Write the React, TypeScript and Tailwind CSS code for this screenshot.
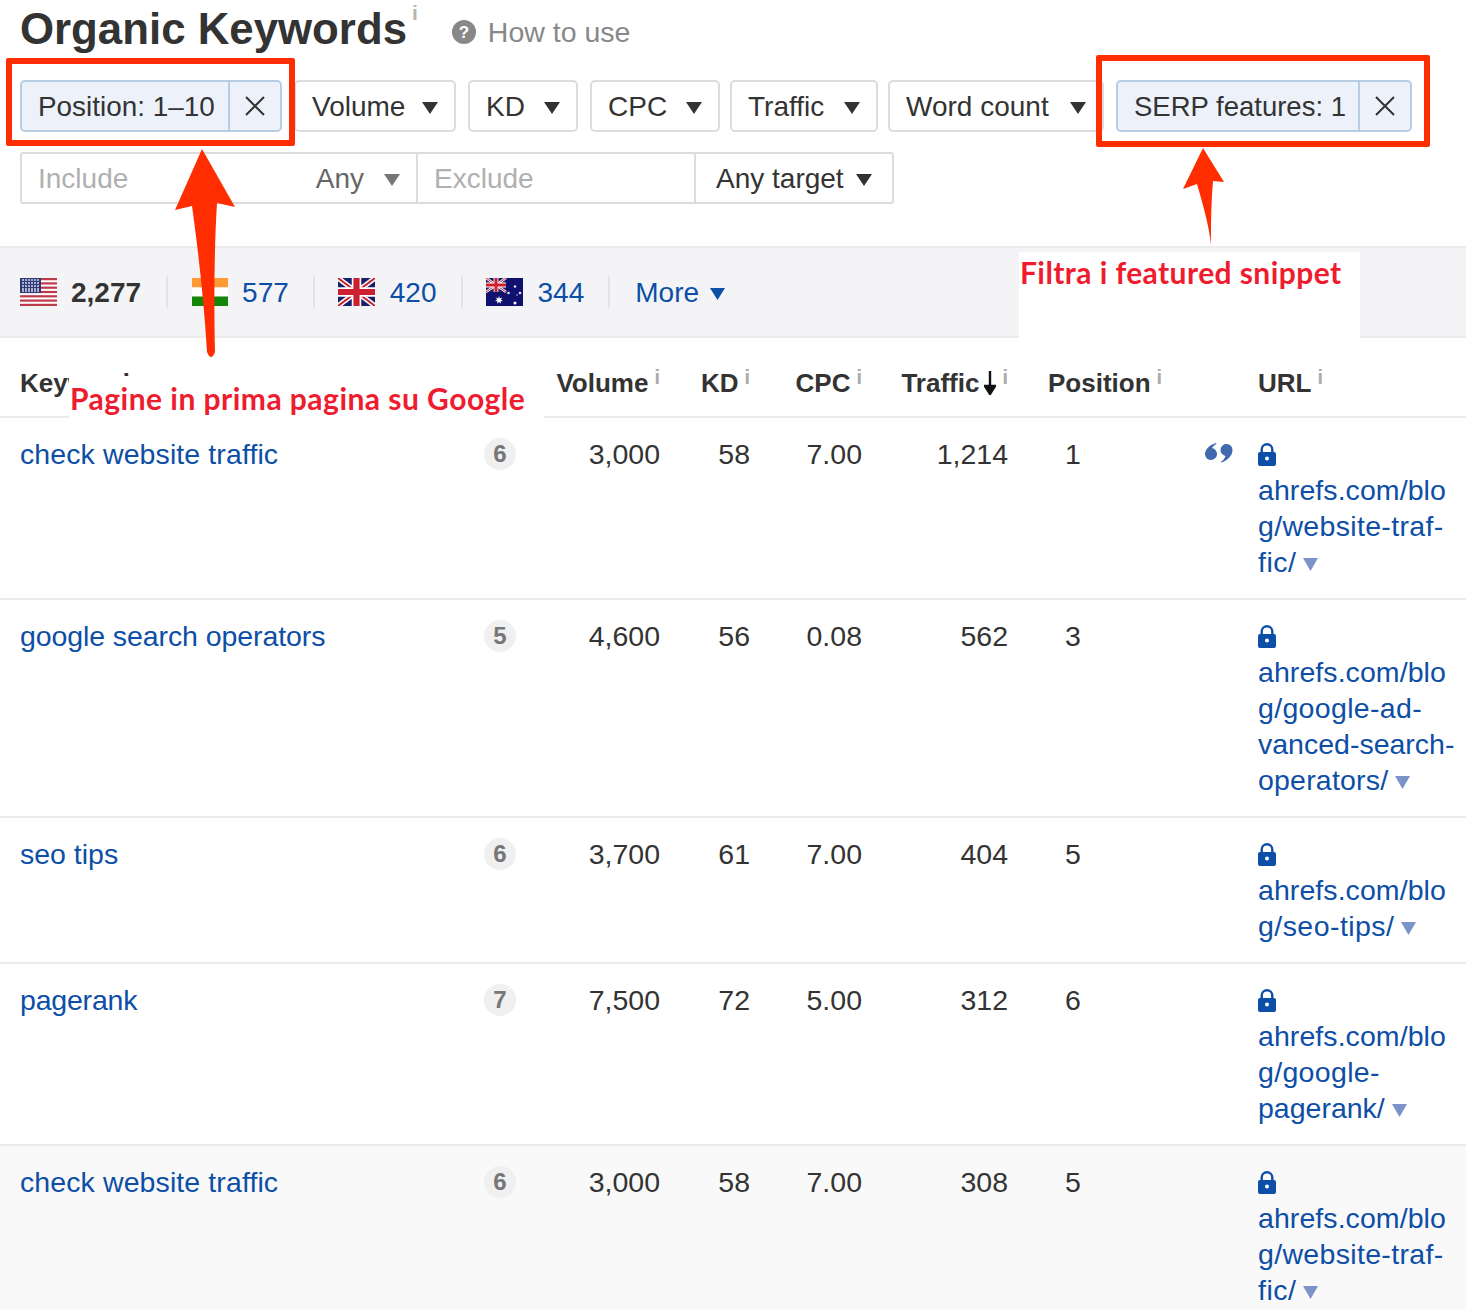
import React from "react";

const Tri = ({ c = "#333", w = 16, h = 12 }: { c?: string; w?: number; h?: number }) => (
  <svg width={w} height={h} viewBox={`0 0 ${w} ${h}`} className="shrink-0 mt-[3px]">
    <path d={`M0 0H${w}L${w / 2} ${h}Z`} fill={c} />
  </svg>
);

const Info = () => (
  <span className="ml-[6px] self-start mt-[2px] text-[20px] leading-[20px] font-bold text-[#acacac]">i</span>
);

const Chip = ({ label, w, sep, size }: { label: string; w: string; sep: string; size: string }) => (
  <div className={`${w} h-[52px] flex border-2 border-[#b6cde4] bg-[#edf2fa] rounded-[5px]`}>
    <div className={`${sep} ${size} flex items-center pl-[16px] pt-[2px] border-r-2 border-[#b6cde4] whitespace-nowrap`}>{label}</div>
    <div className="flex-1 flex items-center justify-center">
      <svg width="20" height="20" viewBox="0 0 20 20">
        <path d="M1 1L19 19M19 1L1 19" stroke="#333" strokeWidth="2" />
      </svg>
    </div>
  </div>
);

const Btn = ({ label, w, ml }: { label: string; w: string; ml: string }) => (
  <div className={`${w} ${ml} h-[52px] pl-[16px] pr-[16px] flex items-center justify-between border-2 border-[#dcdcdc] rounded-[5px] whitespace-nowrap text-[28px]`}>
    <span className="pt-[2px]">{label}</span>
    <Tri />
  </div>
);

const USFlag = () => (
  <svg width="37" height="28" viewBox="0 0 37 28" className="shrink-0">
    <rect width="37" height="28" fill="#fff" />
    {[0, 4.3, 8.6, 12.9, 17.2, 21.5, 25.8].map((y) => (
      <rect key={y} y={y} width="37" height="2.2" fill="#c0394b" />
    ))}
    <rect width="21" height="15" fill="#2d3a7a" />
    {[2, 5, 8, 11, 14, 17].map((x) =>
      [2, 5, 8, 11, 13].map((y) => <circle key={`${x}-${y}`} cx={x + 1} cy={y} r="0.9" fill="#e8e8f0" />)
    )}
  </svg>
);

const INFlag = () => (
  <svg width="36" height="28" viewBox="0 0 36 28" className="shrink-0">
    <rect width="36" height="9.500" fill="#ff9933" />
    <rect y="9.500" width="36" height="9" fill="#fff" />
    <rect y="18.500" width="36" height="9.500" fill="#138808" />
  </svg>
);

const UKFlagBody = ({ w, h }: { w: number; h: number }) => (
  <>
    <rect width={w} height={h} fill="#1a1f6c" />
    <path d={`M0 0L${w} ${h}M${w} 0L0 ${h}`} stroke="#fff" strokeWidth={h * 0.18} />
    <path d={`M0 0L${w} ${h}M${w} 0L0 ${h}`} stroke="#cc1f2f" strokeWidth={h * 0.07} />
    <path d={`M${w / 2} 0V${h}M0 ${h / 2}H${w}`} stroke="#fff" strokeWidth={h * 0.34} />
    <path d={`M${w / 2} 0V${h}M0 ${h / 2}H${w}`} stroke="#cc1f2f" strokeWidth={h * 0.22} />
  </>
);

const UKFlag = () => (
  <svg width="37" height="28" viewBox="0 0 37 28" className="shrink-0">
    <UKFlagBody w={37} h={28} />
  </svg>
);

const AUFlag = () => (
  <svg width="37" height="28" viewBox="0 0 37 28" className="shrink-0">
    <rect width="37" height="28" fill="#10106e" />
    <UKFlagBody w={20} h={14} />
    <path d="M13 18l.9 2.500 2.400-1-1.400 2.200 2.200 1.200-2.500.3.300 2.600-1.800-1.900-1.900 1.900.3-2.600-2.500-.3 2.200-1.200-1.400-2.200 2.400 1Z" fill="#fff" />
    <circle cx="29" cy="8.500" r="1.300" fill="#dfe0f0" />
    <circle cx="22.500" cy="15" r="1.300" fill="#dfe0f0" />
    <circle cx="34" cy="15" r="1.300" fill="#dfe0f0" />
    <circle cx="29" cy="25" r="1.500" fill="#fff" />
    <circle cx="31" cy="17" r="0.700" fill="#dfe0f0" />
  </svg>
);

const Lock = () => (
  <svg width="18" height="23" viewBox="0 0 18 23">
    <path
      d="M9 0a6.500 6.500 0 0 0-6.500 6.500V9H2a2 2 0 0 0-2 2v10a2 2 0 0 0 2 2h14a2 2 0 0 0 2-2V11a2 2 0 0 0-2-2h-.5V6.500A6.500 6.500 0 0 0 9 0Zm0 2.400a4.100 4.100 0 0 1 4.100 4.100V9H4.900V6.500A4.100 4.100 0 0 1 9 2.400Z"
      fill="#0d4ea6"
      fillRule="evenodd"
    />
    <circle cx="9" cy="15.500" r="2" fill="#fff" />
  </svg>
);

const Quote = () => (
  <svg width="28" height="20" viewBox="0 0 28 20" className="mt-[-2px]">
    <path d="M11 0C4 2 0 7 0 11a6 6 0 1 0 7-5.900C8 3.500 9.500 2 11.500 1Z" fill="#4169ad" />
    <path d="M27.500 7C27.500 12 23.500 17 16.500 19.500L16 18.500C18 17.500 19.500 15.500 20.500 12.900a6 6 0 1 1 7-5.900Z" fill="#4169ad" />
  </svg>
);

type Line = [string, string?];

type Row = {
  kw: string;
  kwc?: string;
  n: number;
  vol: string;
  kd: string;
  cpc: string;
  traffic: string;
  pos: string;
  quote?: boolean;
  url: Line[];
  bg?: string;
};

const rows: Row[] = [
  { kw: "check website traffic", kwc: "tracking-[0.1px]", n: 6, vol: "3,000", kd: "58", cpc: "7.00", traffic: "1,214", pos: "1", quote: true, url: [["ahrefs.com/blo", "tracking-[0.07px]"], ["g/website-traf-", "tracking-[0.33px]"], ["fic/", "tracking-[0.5px]"]] },
  { kw: "google search operators", kwc: "tracking-[-0.09px]", n: 5, vol: "4,600", kd: "56", cpc: "0.08", traffic: "562", pos: "3", url: [["ahrefs.com/blo", "tracking-[0.07px]"], ["g/google-ad-", "tracking-[0.33px]"], ["vanced-search-"], ["operators/", "tracking-[0.2px]"]] },
  { kw: "seo tips", n: 6, vol: "3,700", kd: "61", cpc: "7.00", traffic: "404", pos: "5", url: [["ahrefs.com/blo", "tracking-[0.07px]"], ["g/seo-tips/", "tracking-[0.45px]"]] },
  { kw: "pagerank", kwc: "tracking-[-0.2px]", n: 7, vol: "7,500", kd: "72", cpc: "5.00", traffic: "312", pos: "6", url: [["ahrefs.com/blo", "tracking-[0.07px]"], ["g/google-", "tracking-[0.33px]"], ["pagerank/"]] },
  { kw: "check website traffic", kwc: "tracking-[0.1px]", n: 6, vol: "3,000", kd: "58", cpc: "7.00", traffic: "308", pos: "5", url: [["ahrefs.com/blo", "tracking-[0.07px]"], ["g/website-traf-", "tracking-[0.33px]"], ["fic/", "tracking-[0.5px]"]], bg: "bg-[#f9f9f9]" },
];

const COLS = "grid grid-cols-[20px_464px_32px_144px_90px_112px_146px_197px_53px_208px]";

const Head = ({ label, cls }: { label: React.ReactNode; cls: string }) => (
  <div className={`${cls} flex items-center`}>
    {label}
    <Info />
  </div>
);

export default function App() {
  return (
    <div
      className="relative w-[1466px] h-[1310px] overflow-hidden bg-white text-[#333] text-[28.5px] leading-[36px]"
      style={{ fontFamily: '"Liberation Sans", Arial, sans-serif' }}
    >
      {/* Title */}
      <div className="h-[80px] pl-[20px] flex items-start">
        <h1 className="text-[43.8px] leading-[58px] font-bold">Organic Keywords</h1>
        <span className="ml-[5px] mt-[2px] text-[21px] leading-[21px] text-[#b5b5b5] font-bold">i</span>
        <div className="ml-[34px] mt-[14px] flex items-center text-[#888]">
          <svg width="24" height="24" viewBox="0 0 24 24">
            <circle cx="12" cy="12" r="12" fill="#888" />
            <text x="12" y="18" textAnchor="middle" fontSize="17" fontWeight="700" fill="#fff" fontFamily="Liberation Sans">?</text>
          </svg>
          <span className="ml-[12px]">How to use</span>
        </div>
      </div>

      {/* Filters */}
      <div className="flex pl-[20px]">
        <Chip label="Position: 1–10" size="text-[27.9px]" w="w-[262px]" sep="w-[208px]" />
        <Btn label="Volume" w="w-[162px]" ml="ml-[12px]" />
        <Btn label="KD" w="w-[110px]" ml="ml-[12px]" />
        <Btn label="CPC" w="w-[130px]" ml="ml-[12px]" />
        <Btn label="Traffic" w="w-[148px]" ml="ml-[10px]" />
        <Btn label="Word count" w="w-[216px]" ml="ml-[10px]" />
        <div className="ml-[12px]">
          <Chip label="SERP features: 1" size="text-[27.5px]" w="w-[296px]" sep="w-[242px]" />
        </div>
      </div>

      <div className="mt-[20px] ml-[20px] w-[874px] h-[52px] flex border-2 border-[#dcdcdc] rounded-[3px] text-[28px]">
        <div className="w-[396px] flex items-center justify-between pl-[16px] pr-[16px] border-r-2 border-[#dcdcdc]">
          <span className="text-[#b0b0b0] pt-[2px]">Include</span>
          <div className="flex items-center gap-[20px] text-[#666]">
            <span className="pt-[2px]">Any</span>
            <Tri c="#777" />
          </div>
        </div>
        <div className="w-[278px] flex items-center pl-[16px] pt-[2px] border-r-2 border-[#dcdcdc] text-[#b0b0b0]">Exclude</div>
        <div className="flex-1 flex items-center justify-between pl-[20px] pr-[20px]">
          <span className="pt-[2px]">Any target</span>
          <Tri />
        </div>
      </div>

      {/* Countries */}
      <div className="mt-[42px] h-[92px] flex items-center bg-[#f4f4f6] border-y-2 border-[#ebebeb] pl-[20px] text-[#0d4ea6] text-[28px]">
        <div className="flex items-center gap-[14px] pr-[25px] h-[32px] border-r-2 border-[#e4e4e6]">
          <USFlag />
          <span className="font-bold text-[#333] pt-[2px]">2,277</span>
        </div>
        <div className="flex items-center gap-[14px] pl-[24px] pr-[24px] h-[32px] border-r-2 border-[#e4e4e6]">
          <INFlag />
          <span className="pt-[2px]">577</span>
        </div>
        <div className="flex items-center gap-[15px] pl-[23px] pr-[24px] h-[32px] border-r-2 border-[#e4e4e6]">
          <UKFlag />
          <span className="pt-[2px]">420</span>
        </div>
        <div className="flex items-center gap-[15px] pl-[23px] pr-[24px] h-[32px] border-r-2 border-[#e4e4e6]">
          <AUFlag />
          <span className="pt-[2px]">344</span>
        </div>
        <div className="flex items-center gap-[11px] pl-[25px]">
          <span className="pt-[2px]">More</span>
          <Tri c="#0d4ea6" w={15} h={12} />
        </div>
      </div>

      {/* Table header */}
      <div className={`${COLS} h-[80px] border-b-2 border-[#ebebeb] text-[26px] font-bold items-center pt-[12px]`}>
        <div />
        <div>Keyword</div>
        <div />
        <Head label="Volume" cls="justify-end" />
        <Head label="KD" cls="justify-end" />
        <Head label="CPC" cls="justify-end" />
        <Head
          label={
            <span className="flex items-center">
              Traffic
              <svg width="12" height="24" viewBox="0 0 12 24" className="ml-[5px]">
                <path d="M6 0V20M1 15L6 23L11 15Z" stroke="#111" strokeWidth="2.400" fill="#111" />
              </svg>
            </span>
          }
          cls="justify-end"
        />
        <Head label="Position" cls="pl-[40px]" />
        <div />
        <Head label="URL" cls="" />
      </div>

      {/* Rows */}
      {rows.map((r, i) => (
        <div key={i} className={`${COLS} ${r.bg ?? ""} pt-[18px] pb-[18px] border-b-2 border-[#ebebeb] items-start`}>
          <div />
          <div className={`text-[#0d4ea6] ${r.kwc ?? ""}`}>{r.kw}</div>
          <div className="w-[32px] h-[32px] mt-[2px] rounded-full bg-[#f0f0f0] text-[#777] text-[24px] font-bold flex items-center justify-center">{r.n}</div>
          <div className="text-right">{r.vol}</div>
          <div className="text-right">{r.kd}</div>
          <div className="text-right">{r.cpc}</div>
          <div className="text-right">{r.traffic}</div>
          <div className="pl-[57px]">{r.pos}</div>
          <div className="h-[36px] flex items-center">{r.quote && <Quote />}</div>
          <div className="text-[#0d4ea6] whitespace-nowrap">
            <div className="h-[36px] flex items-center"><Lock /></div>
            {r.url.map(([t, c], j) => (
              <div key={j} className={`flex items-center h-[36px] ${c ?? ""}`}>
                {t}
                {j === r.url.length - 1 && (
                  <span className="ml-[7px] mt-[1px]"><Tri c="#7b93c9" w={15} h={13} /></span>
                )}
              </div>
            ))}
          </div>
        </div>
      ))}

      {/* Annotations */}
      <div className="absolute left-[6px] top-[58px] w-[289px] h-[88px] border-[6px] border-[#ff2d00] rounded-[2px]" />
      <div className="absolute left-[1096px] top-[55px] w-[334px] h-[92px] border-[6px] border-[#ff2d00] rounded-[2px]" />

      <svg className="absolute left-0 top-0 pointer-events-none" width="1466" height="400" viewBox="0 0 1466 400">
        <path d="M202 149L235 207L217 203C214 250 214 310 215 352Q211 362 207 352C204 300 198 250 192 206L175 210Z" fill="#ff2d00" />
        <path d="M1203 148L1224 182L1213 181C1211 205 1211 225 1211 245C1209 225 1203 205 1197 184L1183 189Z" fill="#ff2d00" />
      </svg>

      <div className="absolute left-[1019px] top-[252px] w-[341px] h-[88px] bg-white" />
      <div
        className="absolute left-[1020px] top-[253px] text-[30px] leading-[38px] tracking-[0.42px] font-bold text-[#ee1c2e] whitespace-nowrap"
        style={{ fontFamily: "Lato, sans-serif" }}
      >
        Filtra i featured snippet
      </div>
      <div className="absolute left-[69px] top-[376px] w-[475px] h-[46px] bg-white" />
      <div
        className="absolute left-[70px] top-[379px] text-[30px] leading-[38px] tracking-[0.47px] font-bold text-[#ee1c2e] whitespace-nowrap"
        style={{ fontFamily: "Lato, sans-serif" }}
      >
        Pagine in prima pagina su Google
      </div>
    </div>
  );
}
